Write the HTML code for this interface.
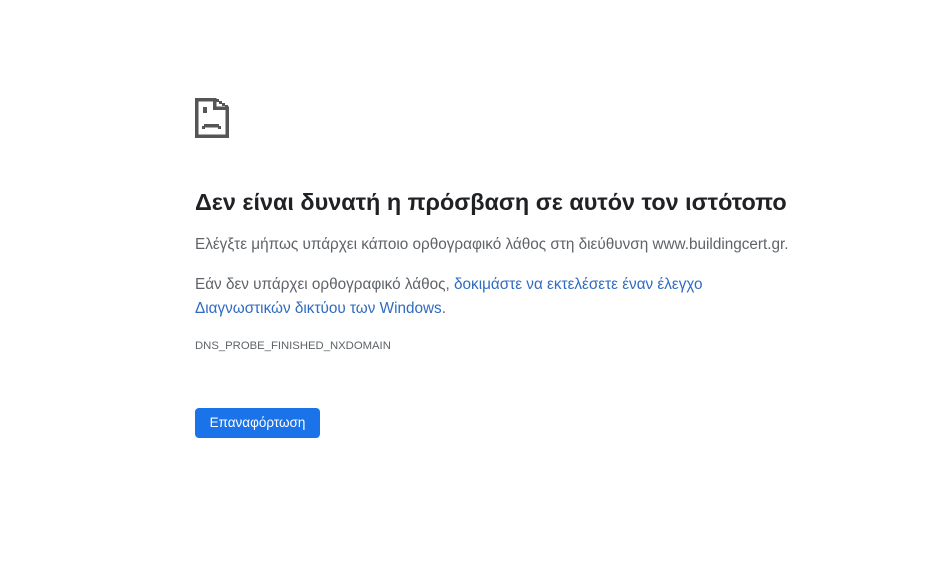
<!DOCTYPE html>
<html><head><meta charset="utf-8"><style>
body{margin:0;background:#fff;width:948px;height:575px;overflow:hidden;font-family:"Liberation Sans","DejaVu Sans",sans-serif;}
.ic{position:absolute;left:192px;top:95px}
h1{position:absolute;left:195px;top:189px;margin:0;font-size:23.4px;font-weight:700;color:#202124;white-space:nowrap}
p{position:absolute;left:195px;margin:0;font-size:15.3px;color:#5f6368;line-height:24px;white-space:nowrap}
a{color:#2f6bc0;text-decoration:none}
.code{position:absolute;left:195px;top:340px;font-size:11.3px;color:#5f6368}
.btn{position:absolute;left:195px;top:408px;width:125px;height:30px;background:#1a73e8;border-radius:4px;color:#fff;font-size:13.5px;line-height:30px;text-align:center}
</style></head><body>
<svg class="ic" width="40" height="46" viewBox="0 0 40 46" fill="#555">
<rect x="3" y="3" width="3.5" height="40"/>
<rect x="3" y="39.5" width="34" height="3.5"/>
<rect x="33.5" y="13" width="3.5" height="30"/>
<rect x="3" y="3" width="20" height="3.5"/>
<rect x="21" y="3" width="3.5" height="12"/>
<rect x="21" y="11.5" width="16" height="3.5"/>
<rect x="24" y="4" width="3" height="3"/>
<rect x="27" y="6" width="3" height="3"/>
<rect x="30" y="8" width="3" height="3"/>
<rect x="33" y="10" width="3" height="3"/>
<rect x="11" y="12" width="4" height="6"/>
<rect x="12" y="29" width="15" height="3.5"/>
<rect x="10" y="31" width="3" height="3"/>
<rect x="26" y="31" width="3" height="3"/>
</svg>
<h1>Δεν είναι δυνατή η πρόσβαση σε αυτόν τον ιστότοπο</h1>
<p style="top:233px">Ελέγξτε μήπως υπάρχει κάποιο ορθογραφικό λάθος στη διεύθυνση www.buildingcert.gr.</p>
<p style="top:273px">Εάν δεν υπάρχει ορθογραφικό λάθος, <a>δοκιμάστε να εκτελέσετε έναν έλεγχο<br>Διαγνωστικών δικτύου των Windows</a>.</p>
<div class="code">DNS_PROBE_FINISHED_NXDOMAIN</div>
<div class="btn">Επαναφόρτωση</div>
</body></html>
